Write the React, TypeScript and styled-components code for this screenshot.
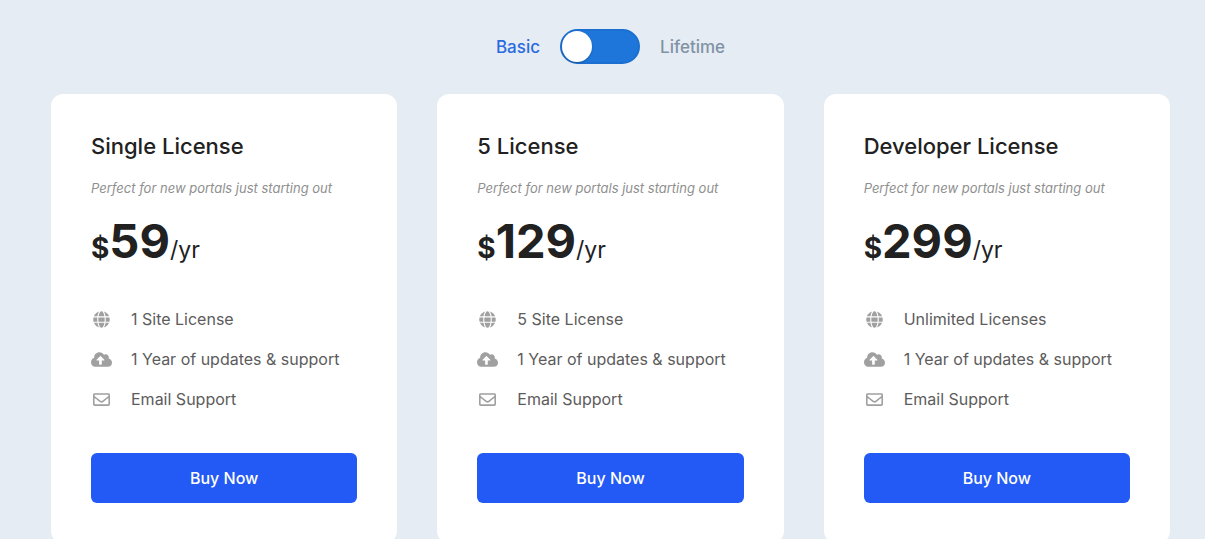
import React, { useState } from "react";
import styled, { createGlobalStyle } from "styled-components";
import { FaCloudUploadAlt, FaRegEnvelope } from "react-icons/fa";

const GlobalStyle = createGlobalStyle`
  *, *::before, *::after { box-sizing: border-box; }
  body {
    margin: 0;
    background: #e5ecf3;
    color: #212121;
    font-family: Inter, "Liberation Sans", sans-serif;
  }
`;

const Page = styled.main`
  padding: 29px 35px 40px 51px;
`;

const PlanSwitch = styled.div`
  display: flex;
  justify-content: center;
  align-items: center;
  gap: 20px;
  height: 35px;
  margin-bottom: 30px;
`;

const SwitchLabel = styled.label<{ $active: boolean }>`
  font-size: 17px;
  line-height: 24px;
  font-weight: 500;
  color: ${({ $active }) => ($active ? "#2a6be0" : "#8292a5")};
  cursor: pointer;
`;

const Toggle = styled.input`
  appearance: none;
  display: flex;
  align-items: center;
  width: 80px;
  height: 35px;
  margin: 0;
  border: 2px solid #1b6fd0;
  border-radius: 18px;
  background: #1e76db;
  cursor: pointer;

  &::before {
    content: "";
    width: 30px;
    height: 31px;
    border-radius: 50%;
    background: #fff;
    box-shadow: 0 1px 2px rgba(0, 0, 0, 0.25);
  }

  &:checked {
    justify-content: flex-end;
  }
`;

const Plans = styled.div`
  display: grid;
  grid-template-columns: repeat(3, minmax(0, 1fr));
  gap: 40px;
`;

const Card = styled.section`
  padding: 36px 40px 40px;
  border-radius: 12px;
  background: #fff;
`;

const Title = styled.h2`
  margin: 0 0 16px;
  font-size: 22px;
  line-height: 32px;
  font-weight: 500;
`;

const Tagline = styled.p`
  margin: 0 0 13px;
  font-size: 13px;
  line-height: 20px;
  font-style: italic;
  color: #8f8f8f;
`;

const Price = styled.p`
  margin: 0 0 36px;
  font-size: 47px;
  line-height: 60px;
  font-weight: 700;
`;

const Currency = styled.span`
  font-size: 28px;
  line-height: 1;
`;

const Period = styled.span`
  font-size: 23px;
  line-height: 1;
  font-weight: 400;
`;

const Features = styled.ul`
  display: grid;
  gap: 16px;
  margin: 0 0 42px;
  padding: 0;
  list-style: none;
`;

const Feature = styled.li`
  display: flex;
  align-items: center;
  gap: 19px;
  font-size: 16px;
  line-height: 24px;
  color: #5c5c5c;
  white-space: nowrap;
`;

const IconSlot = styled.span<{ $wide?: boolean }>`
  display: flex;
  justify-content: center;
  width: 21px;
  color: #a0a0a0;

  svg {
    display: block;
    width: ${({ $wide }) => ($wide ? "21px" : "17px")};
    height: 17px;
  }
`;

const BuyButton = styled.button`
  display: block;
  width: 100%;
  height: 50px;
  border: 0;
  border-radius: 6px;
  background: #235af5;
  color: #fff;
  font: inherit;
  font-size: 16px;
  font-weight: 500;
  cursor: pointer;
`;

const GlobeIcon = () => (
  <svg viewBox="0 0 496 512" fill="currentColor" aria-hidden="true">
    <path d="M336.5 160C322 70.700 287.800 8 248 8s-74 62.700-88.500 152h177zM152 256c0 22.200 1.200 43.500 3.300 64h185.300c2.100-20.500 3.300-41.800 3.300-64s-1.200-43.500-3.300-64H155.300c-2.100 20.500-3.300 41.800-3.300 64zm324.700-96c-28.600-67.900-86.500-120.400-158-141.600 24.400 33.800 41.200 84.700 50 141.600h108zM177.200 18.400C105.800 39.600 47.800 92.100 19.300 160h108c8.700-56.900 25.500-107.800 49.900-141.600zM487.400 192H372.700c2.100 21 3.300 42.500 3.300 64s-1.200 43-3.300 64h114.600c5.500-20.500 8.600-41.800 8.600-64s-3.100-43.500-8.500-64zM120 256c0-21.500 1.200-43 3.300-64H8.600C3.200 212.500 0 233.800 0 256s3.200 43.500 8.600 64h114.600c-2-21-3.200-42.500-3.200-64zm39.500 96c14.500 89.300 48.700 152 88.500 152s74-62.700 88.500-152h-177zm159.300 141.600c71.400-21.200 129.400-73.700 158-141.600h-108c-8.800 56.900-25.600 107.800-50 141.600zM19.300 352c28.600 67.900 86.500 120.400 158 141.600-24.400-33.800-41.200-84.700-50-141.600h-108z" />
  </svg>
);

const plans = [
  { name: "Single License", price: 59, sites: "1 Site License" },
  { name: "5 License", price: 129, sites: "5 Site License" },
  { name: "Developer License", price: 299, sites: "Unlimited Licenses" },
];

export default function App() {
  const [lifetime, setLifetime] = useState(false);

  return (
    <>
      <GlobalStyle />
      <Page>
        <PlanSwitch>
          <SwitchLabel htmlFor="billing" $active={!lifetime}>Basic</SwitchLabel>
          <Toggle
            id="billing"
            type="checkbox"
            role="switch"
            checked={lifetime}
            onChange={(e) => setLifetime(e.target.checked)}
          />
          <SwitchLabel htmlFor="billing" $active={lifetime}>Lifetime</SwitchLabel>
        </PlanSwitch>
        <Plans>
          {plans.map((plan) => (
            <Card key={plan.name}>
              <Title>{plan.name}</Title>
              <Tagline>Perfect for new portals just starting out</Tagline>
              <Price>
                <Currency>$</Currency>
                {plan.price}
                <Period>/yr</Period>
              </Price>
              <Features>
                <Feature>
                  <IconSlot><GlobeIcon /></IconSlot>
                  {plan.sites}
                </Feature>
                <Feature>
                  <IconSlot $wide><FaCloudUploadAlt /></IconSlot>
                  1 Year of updates &amp; support
                </Feature>
                <Feature>
                  <IconSlot><FaRegEnvelope /></IconSlot>
                  Email Support
                </Feature>
              </Features>
              <BuyButton type="button">Buy Now</BuyButton>
            </Card>
          ))}
        </Plans>
      </Page>
    </>
  );
}
